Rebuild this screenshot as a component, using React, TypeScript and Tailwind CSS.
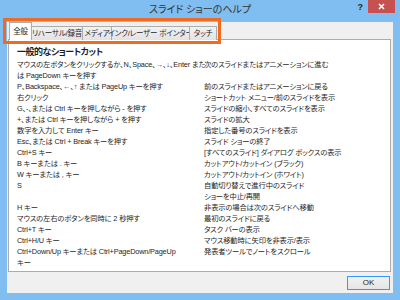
const rows: [string[], string[]][] = [
  [['マウスの左ボタンをクリックするか、N、Space、→、↓、Enter また', 'は PageDown キーを押す'], ['次のスライドまたはアニメーションに進む']],
  [['P、Backspace、←、↑ または PageUp キーを押す'], ['前のスライドまたはアニメーションに戻る']],
  [['右クリック'], ['ショートカット メニュー/前のスライドを表示']],
  [['G、-、または Ctrl キーを押しながら - を押す'], ['スライドの縮小、すべてのスライドを表示']],
  [['+、または Ctrl キーを押しながら + を押す'], ['スライドの拡大']],
  [['数字を入力して Enter キー'], ['指定した番号のスライドを表示']],
  [['Esc、または Ctrl + Break キーを押す'], ['スライド ショーの終了']],
  [['Ctrl+S キー'], ['[すべてのスライド] ダイアログ ボックスの表示']],
  [['B キーまたは . キー'], ['カットアウト/カットイン (ブラック)']],
  [['W キーまたは , キー'], ['カットアウト/カットイン (ホワイト)']],
  [['S'], ['自動切り替えで進行中のスライド', 'ショーを中止/再開']],
  [['H キー'], ['非表示の場合は次のスライドへ移動']],
  [['マウスの左右のボタンを同時に 2 秒押す'], ['最初のスライドに戻る']],
  [['Ctrl+T キー'], ['タスク バーの表示']],
  [['Ctrl+H/U キー'], ['マウス移動時に矢印を非表示/表示']],
  [['Ctrl+Down/Up キーまたは Ctrl+PageDown/PageUp', 'キー'], ['発表者ツールでノートをスクロール']],
];

const tabs = [
  { label: 'リハーサル/録音', w: 'w-[52px]' },
  { label: 'メディア', w: 'w-[30px]' },
  { label: 'インク/レーザー ポインター', w: 'w-[79px]' },
  { label: 'タッチ', w: 'w-[28px]' },
];

export default function App() {
  return (
    <div className="relative flex h-[300px] w-[400px] flex-col overflow-hidden bg-[#80bdf1] font-['Liberation_Sans','Noto_Sans_CJK_JP',sans-serif] text-[#1e1e1e] [font-feature-settings:'palt']">
      {/* title bar */}
      <div className="grid h-[22px] grid-cols-[1fr_auto_1fr]">
        <div />
        <div className="pt-[3px] text-[10px] leading-[14px] text-[#333]">スライド ショーのヘルプ</div>
        <div className="flex items-start justify-end pr-[5px]">
          <span className="mr-[5px] mt-[2px] text-[9px] font-bold leading-[10px] text-[#222]">?</span>
          <button className="flex h-[13px] w-[27px] items-center justify-center bg-[#c75050]" aria-label="Close">
            <svg width="7" height="7" viewBox="0 0 7 7" stroke="white" strokeWidth="1.6">
              <path d="M1 1l5 5M6 1l-5 5" />
            </svg>
          </button>
        </div>
      </div>

      {/* body */}
      <div className="mb-[7px] ml-[7px] mr-[7px] flex flex-1 flex-col bg-[#f0f0f0]">
        <div className="relative z-10 flex h-[18px] items-end pl-[2px] text-[7.5px] tracking-[-0.2px]">
          <div className="flex h-[18px] w-[23px] items-center justify-center border border-b-0 border-[#acacac] bg-white">
            全般
          </div>
          {tabs.map(t => (
            <div
              key={t.label}
              className={`-ml-px flex h-[14px] ${t.w} items-center justify-center whitespace-nowrap border border-b-0 border-[#acacac] bg-gradient-to-b from-[#f2f2f2] to-[#e3e3e3]`}
            >
              {t.label}
            </div>
          ))}
        </div>
        <div className="-mt-px ml-[1px] mr-[2px] h-[233px] border border-[#acacac] bg-white pl-[8px] pt-[5px]">
          <div className="text-[9px] font-bold leading-[14px] tracking-[-0.5px]">一般的なショートカット</div>
          <div className="text-[7.3px] leading-[11px] tracking-[-0.15px]">
            {rows.map(([l, r], i) => (
              <div key={i} className="grid grid-cols-[187px_1fr] whitespace-nowrap">
                <div>{l.map(s => <div key={s}>{s}</div>)}</div>
                <div>{r.map(s => <div key={s}>{s}</div>)}</div>
              </div>
            ))}
          </div>
        </div>
        <div className="flex flex-1 items-center justify-end pr-[3px]">
          <button className="flex h-[14px] w-[43px] items-center justify-center border border-[#3399ff] bg-gradient-to-b from-[#f2f2f2] to-[#e5e5e5] text-[8px]">
            OK
          </button>
        </div>
      </div>

      {/* highlight */}
      <div className="absolute left-[3px] top-[18px] h-[26px] w-[218px] border-[3px] border-[#ef6a22]" />
    </div>
  );
}
